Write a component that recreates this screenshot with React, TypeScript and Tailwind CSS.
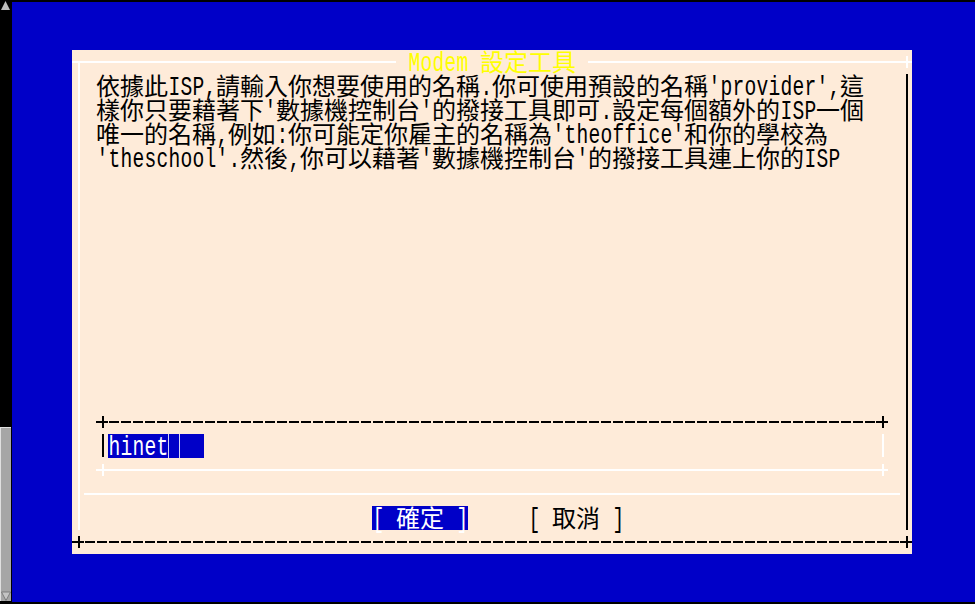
import React from "react";

// terminal cell: 12px wide, 24px tall; CJK takes two cells
const isWide = (ch: string) => (ch.codePointAt(0) ?? 0) > 0x2e7f;

function Glyphs({ text }: { text: string }) {
  return (
    <>
      {Array.from(text).map((ch, i) =>
        isWide(ch) ? (
          <span key={i} className="inline-block w-[24px] text-center">
            {ch}
          </span>
        ) : (
          <span key={i} className="inline-flex w-[12px] justify-center">
            <span className="inline-block shrink-0 scale-x-[0.7] font-['Liberation_Mono',monospace] text-[28px] leading-[18px]">
              {ch === " " ? "\u00a0" : ch}
            </span>
          </span>
        )
      )}
    </>
  );
}

function TextRow({ children, className = "" }: { children: React.ReactNode; className?: string }) {
  return (
    <div
      className={`h-[24px] whitespace-nowrap font-['Noto_Sans_CJK_TC',sans-serif] text-[24px] leading-[21px] ${className}`}
    >
      {children}
    </div>
  );
}

function Plus({ color, d = "M0 12H12M7 6V18" }: { color: string; d?: string }) {
  return (
    <svg width="12" height="24" className="block shrink-0">
      <path d={d} stroke={color} strokeWidth="2" fill="none" />
    </svg>
  );
}

function Bar({ color }: { color: string }) {
  return (
    <svg width="12" height="24" className="block shrink-0">
      <path d="M7 0V23" stroke={color} strokeWidth="2" fill="none" />
    </svg>
  );
}

const lines = [
  "依據此ISP,請輸入你想要使用的名稱.你可使用預設的名稱'provider',這",
  "樣你只要藉著下'數據機控制台'的撥接工具即可.設定每個額外的ISP一個",
  "唯一的名稱,例如:你可能定你雇主的名稱為'theoffice'和你的學校為",
  "'theschool'.然後,你可以藉著'數據機控制台'的撥接工具連上你的ISP",
];

function ScrollStrip() {
  return (
    <div className="flex h-[604px] w-[12px] shrink-0 flex-col bg-black">
      <svg width="11" height="11" className="block">
        <path d="M5.5 1L10 10H1Z" fill="#bdbdbd" />
      </svg>
      <div className="flex-1" />
      <div className="flex h-[174px] w-[11px] flex-col justify-end border-l border-t border-[#e0e0e0] bg-[#a6a6a6]">
        <svg width="10" height="10" className="block">
          <path d="M0.5 1H9.5L5 9.5Z" fill="#c4c4c4" stroke="#707070" strokeWidth="0.8" />
        </svg>
      </div>
      <div className="h-[3px]" />
    </div>
  );
}

function Dialog() {
  return (
    <div className="flex h-[504px] w-[840px] flex-col bg-[#feebd9]">
      {/* top border with title */}
      <div className="flex h-[24px] items-center">
        <Plus color="#ffffff" d="M0 12H12M7 12V24" />
        <div className="h-[2px] w-[312px] bg-white" />
        <div className="w-[12px]" />
        <div className="w-[168px]">
          <TextRow className="text-[#ffff00]">
            <Glyphs text="Modem 設定工具" />
          </TextRow>
        </div>
        <div className="w-[12px]" />
        <div className="h-[2px] w-[312px] bg-white" />
        <Plus color="#ffffff" />
      </div>

      {/* body */}
      <div className="flex h-[456px]">
        <div className="w-[12px] pl-[6px]">
          <div className="h-full w-[2px] bg-white" />
        </div>

        <div className="flex w-[816px] flex-col">
          <div className="pl-[12px] text-black">
            {lines.map((l) => (
              <TextRow key={l}>
                <Glyphs text={l} />
              </TextRow>
            ))}
          </div>

          <div className="h-[240px]" />

          {/* input box */}
          <div className="flex h-[24px] items-center pl-[12px]">
            <Plus color="#000000" />
            <div className="h-[2px] w-[768px] bg-[repeating-linear-gradient(90deg,transparent_0_1px,#000_1px_11px,transparent_11px_12px)]" />
            <Plus color="#000000" />
          </div>
          <div className="flex h-[24px] pl-[12px]">
            <Bar color="#000000" />
            <div className="flex h-[24px] w-[96px] bg-[#0000c8] text-white">
              <TextRow>
                <Glyphs text="hinet" />
              </TextRow>
              <div className="box-border h-[24px] w-[12px] border-x border-[#d4d4f4]" />
            </div>
            <div className="w-[672px]" />
            <Bar color="#ffffff" />
          </div>
          <div className="flex h-[24px] items-center pl-[12px]">
            <Plus color="#ffffff" />
            <div className="h-[2px] w-[768px] bg-white" />
            <Plus color="#ffffff" />
          </div>

          {/* separator */}
          <div className="flex h-[24px] items-center">
            <div className="h-[2px] w-full bg-white" />
          </div>

          {/* buttons */}
          <div className="flex h-[24px] pl-[288px]">
            <div className="h-[24px] w-[96px] bg-[#0000c8] text-white">
              <TextRow>
                <Glyphs text="[ 確定 ]" />
              </TextRow>
            </div>
            <div className="w-[60px]" />
            <div className="h-[24px] w-[96px] text-black">
              <TextRow>
                <Glyphs text="[ 取消 ]" />
              </TextRow>
            </div>
          </div>
        </div>

        <div className="w-[12px] pl-[6px]">
          <div className="h-full w-[2px] bg-black" />
        </div>
      </div>

      {/* bottom border */}
      <div className="flex h-[24px] items-center">
        <Plus color="#000000" />
        <div className="h-[2px] w-[816px] bg-[repeating-linear-gradient(90deg,transparent_0_1px,#000_1px_11px,transparent_11px_12px)]" />
        <Plus color="#000000" />
      </div>
    </div>
  );
}

export default function App() {
  return (
    <div className="flex h-[604px] w-[975px] overflow-hidden bg-black">
      <ScrollStrip />
      <div className="flex flex-1 flex-col">
        <div className="h-[2px]" />
        <div className="h-[600px] bg-[#0000c8] pl-[60px] pt-[48px]">
          <Dialog />
        </div>
      </div>
    </div>
  );
}
